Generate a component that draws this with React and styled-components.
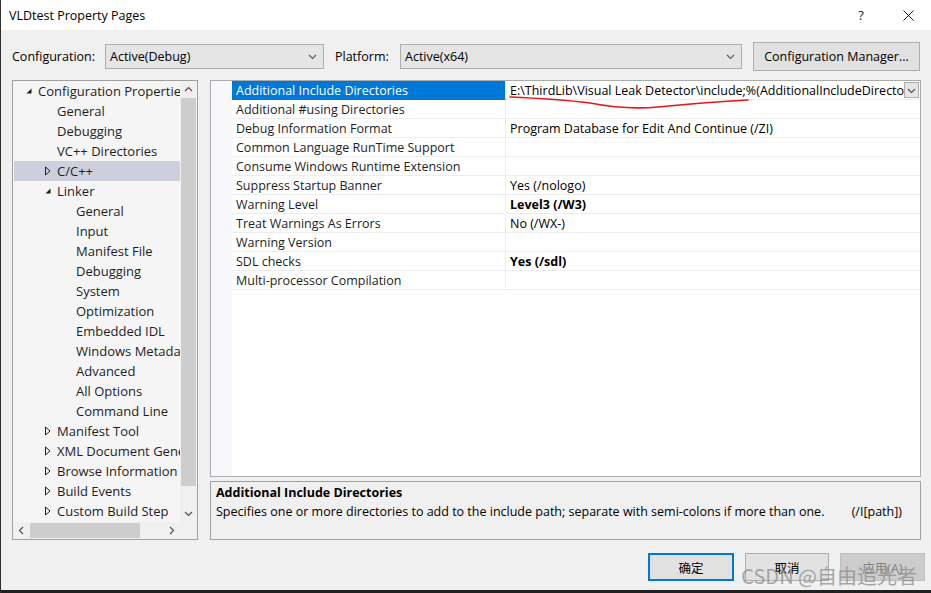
import React from 'react';
import styled, { createGlobalStyle } from 'styled-components';

const GlobalStyle = createGlobalStyle`
    html, body {
        margin: 0;
        padding: 0;
        background: #f0f0f0;
    }
    body {
        font-family: 'Open Sans', 'Noto Sans', 'Noto Sans CJK SC', sans-serif;
        font-size: 12.5px;
        color: #1e1e1e;
    }
`

const treeItems = [
    { text: 'Configuration Properties', level: 0, toggle: 'open' },
    { text: 'General', level: 1 },
    { text: 'Debugging', level: 1 },
    { text: 'VC++ Directories', level: 1 },
    { text: 'C/C++', level: 1, toggle: 'closed', selected: true },
    { text: 'Linker', level: 1, toggle: 'open' },
    { text: 'General', level: 2 },
    { text: 'Input', level: 2 },
    { text: 'Manifest File', level: 2 },
    { text: 'Debugging', level: 2 },
    { text: 'System', level: 2 },
    { text: 'Optimization', level: 2 },
    { text: 'Embedded IDL', level: 2 },
    { text: 'Windows Metadata', level: 2 },
    { text: 'Advanced', level: 2 },
    { text: 'All Options', level: 2 },
    { text: 'Command Line', level: 2 },
    { text: 'Manifest Tool', level: 1, toggle: 'closed' },
    { text: 'XML Document Generator', level: 1, toggle: 'closed' },
    { text: 'Browse Information', level: 1, toggle: 'closed' },
    { text: 'Build Events', level: 1, toggle: 'closed' },
    { text: 'Custom Build Step', level: 1, toggle: 'closed' },
]

const props = [
    { name: 'Additional Include Directories', value: 'E:\\ThirdLib\\Visual Leak Detector\\include;%(AdditionalIncludeDirectories)', selected: true },
    { name: 'Additional #using Directories', value: '' },
    { name: 'Debug Information Format', value: 'Program Database for Edit And Continue (/ZI)' },
    { name: 'Common Language RunTime Support', value: '' },
    { name: 'Consume Windows Runtime Extension', value: '' },
    { name: 'Suppress Startup Banner', value: 'Yes (/nologo)' },
    { name: 'Warning Level', value: 'Level3 (/W3)', bold: true },
    { name: 'Treat Warnings As Errors', value: 'No (/WX-)' },
    { name: 'Warning Version', value: '' },
    { name: 'SDL checks', value: 'Yes (/sdl)', bold: true },
    { name: 'Multi-processor Compilation', value: '' },
]

const Chevron = ({ dir = 'down', color = '#606060', size = 9 }) => {
    const pts = {
        down: '1,3 4.5,6.5 8,3',
        up: '1,6 4.5,2.5 8,6',
        left: '6,1 2.5,4.5 6,8',
        right: '3,1 6.5,4.5 3,8',
    }[dir]
    return (
        <svg width={size} height={size} viewBox="0 0 9 9">
            <polyline points={pts} fill="none" stroke={color} strokeWidth="1.2" />
        </svg>
    )
}

const Toggle = ({ kind }) => {
    if (kind === 'open') {
        return (
            <svg width="8" height="8" viewBox="0 0 8 8">
                <polygon points="6.5,1.5 6.5,6.5 1.5,6.5" fill="#1e1e1e" />
            </svg>
        )
    }
    return (
        <svg width="8" height="10" viewBox="0 0 8 10">
            <polygon points="1.5,1 6,5 1.5,9" fill="none" stroke="#1e1e1e" strokeWidth="1" />
        </svg>
    )
}

const App = () => {
    return (
        <>
            <GlobalStyle />
            <Window>
                <TitleBar>
                    <Title>VLDtest Property Pages</Title>
                    <TitleButton>?</TitleButton>
                    <TitleButton $close>
                        <svg width="11" height="11" viewBox="0 0 11 11">
                            <path d="M0.5 0.5 L10.5 10.5 M10.5 0.5 L0.5 10.5" stroke="#1e1e1e" strokeWidth="1" />
                        </svg>
                    </TitleButton>
                </TitleBar>
                <ConfigRow>
                    <Label $w={93}>Configuration:</Label>
                    <Select $w={219}>
                        <span>Active(Debug)</span>
                        <Chevron />
                    </Select>
                    <Label $w={65} $ml={11}>Platform:</Label>
                    <Select $w={342}>
                        <span>Active(x64)</span>
                        <Chevron />
                    </Select>
                    <Button $w={167} $h={29} $ml={11}>Configuration Manager...</Button>
                </ConfigRow>
                <Main>
                    <TreePanel>
                        <TreeBody>
                            <TreeList>
                                {treeItems.map((t, i) => (
                                    <TreeRow key={i} $selected={t.selected}>
                                        <ToggleBox $level={t.level}>
                                            {t.toggle && <Toggle kind={t.toggle} />}
                                        </ToggleBox>
                                        <TreeText>{t.text}</TreeText>
                                    </TreeRow>
                                ))}
                            </TreeList>
                            <VScroll>
                                <ArrowBox><Chevron dir="up" color="#505050" /></ArrowBox>
                                <Track>
                                    <VThumb />
                                </Track>
                                <ArrowBox><Chevron dir="down" color="#505050" /></ArrowBox>
                            </VScroll>
                        </TreeBody>
                        <HScrollRow>
                            <HScroll>
                                <ArrowBox><Chevron dir="left" color="#505050" /></ArrowBox>
                                <HTrack>
                                    <HThumb />
                                </HTrack>
                                <ArrowBox><Chevron dir="right" color="#505050" /></ArrowBox>
                            </HScroll>
                            <Corner />
                        </HScrollRow>
                    </TreePanel>
                    <RightCol>
                        <Grid>
                            {props.map((p, i) => (
                                <GridRow key={i}>
                                    <Gutter />
                                    <NameCell $selected={p.selected}>{p.name}</NameCell>
                                    <ValueCell $bold={p.bold}>
                                        <ValueText>{p.value}</ValueText>
                                        {p.selected && (
                                            <>
                                                <DropButton><Chevron color="#505050" /></DropButton>
                                                <Scribble width="250" height="16" viewBox="0 0 250 16">
                                                    <path d="M2 1 Q50 3 82 7 Q118 14 150 11 Q200 6 240 4" fill="none" stroke="#e8141a" strokeWidth="1.6" strokeLinecap="round" />
                                                </Scribble>
                                            </>
                                        )}
                                    </ValueCell>
                                </GridRow>
                            ))}
                            <GridFill>
                                <Gutter />
                            </GridFill>
                        </Grid>
                        <Description>
                            <DescTitle>Additional Include Directories</DescTitle>
                            <DescText>
                                <span>Specifies one or more directories to add to the include path; separate with semi-colons if more than one.</span>
                                <span>(/I[path])</span>
                            </DescText>
                        </Description>
                    </RightCol>
                </Main>
                <Footer>
                    <Button $w={86} $h={28} $primary>确定</Button>
                    <Button $w={84} $h={28}>取消</Button>
                    <Button $w={85} $h={28} $disabled>应用(A)</Button>
                    <Watermark>CSDN @自由追光者</Watermark>
                </Footer>
                <BottomStrip />
            </Window>
        </>
    )
}

const Window = styled.div`
    width: 930px;
    height: 593px;
    border-left: 1px solid #2e2e2e;
    background: #f0f0f0;
    display: flex;
    flex-direction: column;
    overflow: hidden;
`

const TitleBar = styled.div`
    height: 30px;
    background: #ffffff;
    display: flex;
    align-items: center;
    padding-left: 8px;
    flex-shrink: 0;
`

const Title = styled.div`
    flex-grow: 1;
    color: #000;
`

const TitleButton = styled.div`
    width: 46px;
    height: 30px;
    display: flex;
    align-items: center;
    justify-content: center;
    font-size: 13px;
    color: #1e1e1e;
    margin-right: ${p => p.$close ? '0' : '1px'};
`

const ConfigRow = styled.div`
    height: 50px;
    box-sizing: border-box;
    padding: 12px 0 9px 11px;
    display: flex;
    align-items: center;
    flex-shrink: 0;
`

const Label = styled.div`
    width: ${p => p.$w}px;
    margin-left: ${p => p.$ml || 0}px;
    flex-shrink: 0;
    color: #000;
`

const Select = styled.div`
    width: ${p => p.$w}px;
    height: 25px;
    box-sizing: border-box;
    border: 1px solid #adadad;
    background: #e5e5e5;
    display: flex;
    align-items: center;
    justify-content: space-between;
    padding: 0 6px 0 4px;
    color: #000;
    flex-shrink: 0;
`

const Button = styled.div`
    width: ${p => p.$w}px;
    height: ${p => p.$h}px;
    margin-left: ${p => p.$ml || 0}px;
    box-sizing: border-box;
    border: ${p => p.$primary ? '2px solid #0078d7' : p.$disabled ? '1px solid #bfbfbf' : '1px solid #adadad'};
    background: ${p => p.$disabled ? '#cccccc' : '#e1e1e1'};
    color: ${p => p.$disabled ? '#838383' : '#000'};
    display: flex;
    align-items: center;
    justify-content: center;
    flex-shrink: 0;
`

const Main = styled.div`
    height: 460px;
    display: flex;
    gap: 12px;
    padding-left: 11px;
    flex-shrink: 0;
`

const TreePanel = styled.div`
    width: 186px;
    height: 460px;
    box-sizing: border-box;
    border: 1px solid #a0a0a0;
    display: flex;
    flex-direction: column;
    background: #f5f5f5;
`

const TreeBody = styled.div`
    flex-grow: 1;
    display: flex;
    min-height: 0;
`

const TreeList = styled.div`
    flex-grow: 1;
    overflow: hidden;
    padding: 0 0 0 1px;
`

const TreeRow = styled.div`
    height: 20px;
    display: flex;
    align-items: center;
    white-space: nowrap;
    background: ${p => p.$selected ? '#cdd0dc' : 'transparent'};
    color: #1e1e1e;
    font-size: 13px;
`

const ToggleBox = styled.div`
    width: 14px;
    margin-left: ${p => 8 + p.$level * 19}px;
    margin-right: 2px;
    display: flex;
    align-items: center;
    justify-content: center;
    flex-shrink: 0;
`

const TreeText = styled.span`
    flex-shrink: 0;
`

const VScroll = styled.div`
    width: 17px;
    display: flex;
    flex-direction: column;
    background: #f0f0f0;
    flex-shrink: 0;
`

const ArrowBox = styled.div`
    width: 17px;
    height: 17px;
    display: flex;
    align-items: center;
    justify-content: center;
    flex-shrink: 0;
`

const Track = styled.div`
    flex-grow: 1;
    padding: 0 1px;
`

const VThumb = styled.div`
    height: 388px;
    background: #cdcdcd;
`

const HScrollRow = styled.div`
    height: 17px;
    display: flex;
    flex-shrink: 0;
`

const HScroll = styled.div`
    flex-grow: 1;
    display: flex;
    background: #f0f0f0;
`

const HTrack = styled.div`
    flex-grow: 1;
    padding: 1px 0;
`

const HThumb = styled.div`
    width: 110px;
    height: 15px;
    background: #cdcdcd;
`

const Corner = styled.div`
    width: 17px;
    background: #f0f0f0;
`

const RightCol = styled.div`
    width: 711px;
    display: flex;
    flex-direction: column;
    gap: 4px;
`

const Grid = styled.div`
    height: 397px;
    box-sizing: border-box;
    border: 1px solid #ababab;
    background: #ffffff;
    display: flex;
    flex-direction: column;
    overflow: hidden;
`

const GridRow = styled.div`
    height: 19px;
    display: flex;
    flex-shrink: 0;
`

const Gutter = styled.div`
    width: 21px;
    background: #f6f8fb;
    flex-shrink: 0;
`

const GridFill = styled.div`
    flex-grow: 1;
    display: flex;
`

const NameCell = styled.div`
    width: 274px;
    box-sizing: border-box;
    padding-left: 4px;
    display: flex;
    align-items: center;
    white-space: nowrap;
    background: ${p => p.$selected ? '#0078d7' : '#ffffff'};
    color: ${p => p.$selected ? '#ffffff' : '#1e1e1e'};
    border-bottom: 1px solid ${p => p.$selected ? '#0078d7' : '#ededed'};
    border-right: 1px solid #ededed;
    flex-shrink: 0;
`

const ValueCell = styled.div`
    position: relative;
    flex-grow: 1;
    min-width: 0;
    box-sizing: border-box;
    padding-left: 4px;
    display: flex;
    align-items: center;
    border-bottom: 1px solid #ededed;
    font-weight: ${p => p.$bold ? 700 : 400};
    color: #000;
`

const ValueText = styled.span`
    flex-grow: 1;
    white-space: nowrap;
    overflow: hidden;
`

const DropButton = styled.div`
    width: 15px;
    height: 16px;
    box-sizing: border-box;
    border: 1px solid #adadad;
    background: #e5e5e5;
    display: flex;
    align-items: center;
    justify-content: center;
    margin-right: 1px;
    flex-shrink: 0;
`

const Scribble = styled.svg`
    position: absolute;
    left: 2px;
    top: 15px;
    pointer-events: none;
`

const Description = styled.div`
    height: 59px;
    box-sizing: border-box;
    border: 1px solid #a0a0a0;
    padding: 2px 5px;
    display: flex;
    flex-direction: column;
    gap: 2px;
    color: #000;
`

const DescTitle = styled.div`
    font-weight: 700;
`

const DescText = styled.div`
    display: flex;
    justify-content: space-between;
    padding-right: 13px;
`

const Footer = styled.div`
    position: relative;
    height: 50px;
    box-sizing: border-box;
    padding: 13px 6px 0 0;
    display: flex;
    justify-content: flex-end;
    align-items: flex-start;
    gap: 11px;
    flex-shrink: 0;
`

const Watermark = styled.div`
    position: absolute;
    right: 14px;
    top: 21px;
    font-size: 20px;
    color: rgba(140, 140, 140, 0.75);
    font-family: 'Noto Sans CJK SC', 'Noto Sans', sans-serif;
    pointer-events: none;
`

const BottomStrip = styled.div`
    height: 3px;
    background: #202020;
    flex-shrink: 0;
`

export default App;
